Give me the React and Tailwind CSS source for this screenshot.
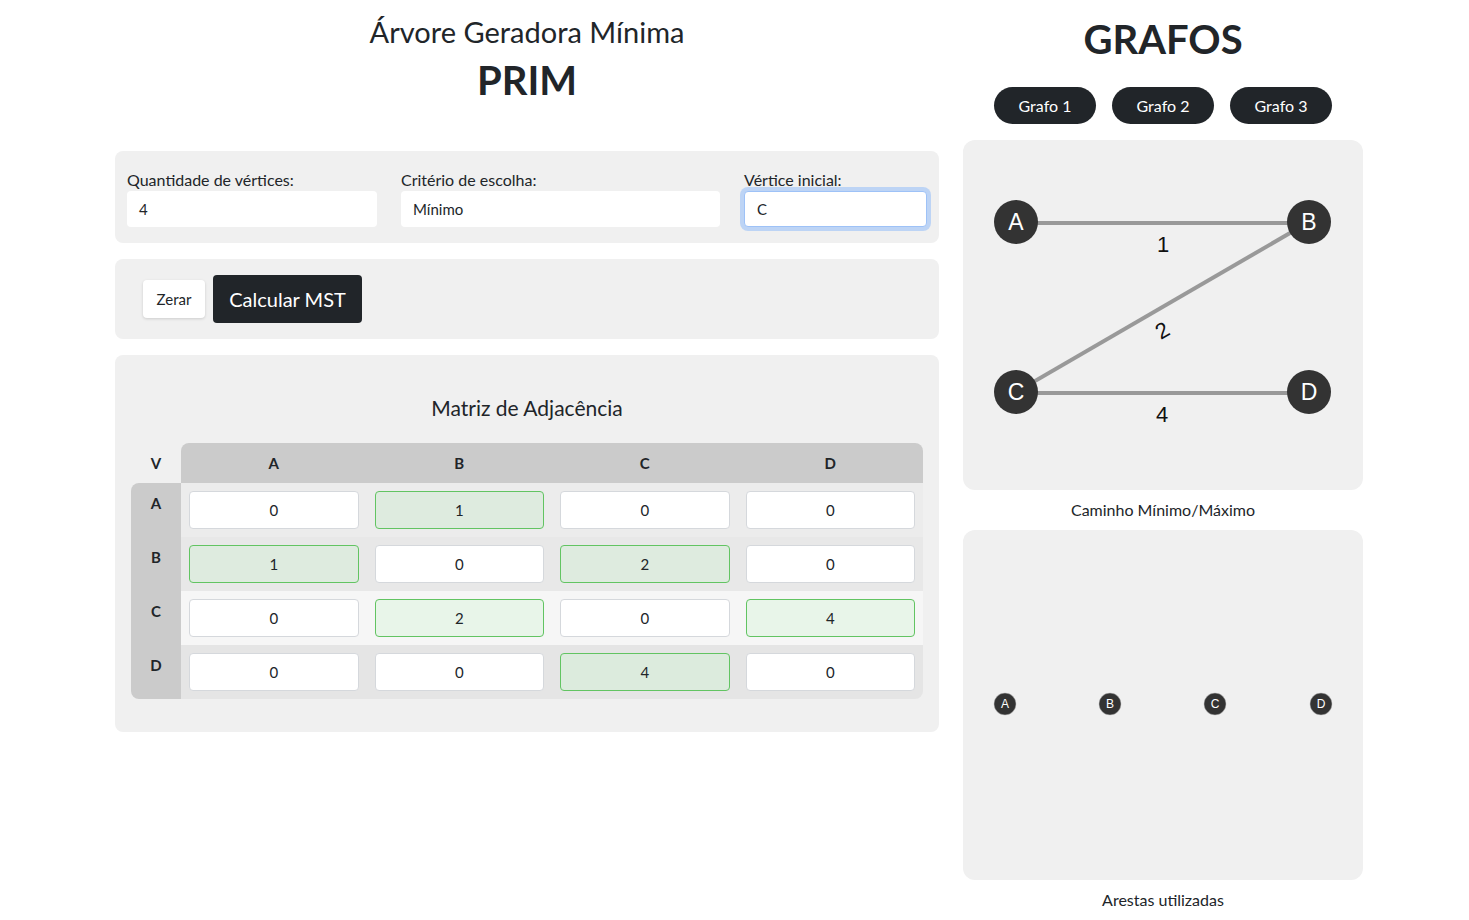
import React from 'react';

const vertices = ['A', 'B', 'C', 'D'];

const matriz = [
  [0, 1, 0, 0],
  [1, 0, 2, 0],
  [0, 2, 0, 4],
  [0, 0, 4, 0],
];

const rowBg = ['bg-[#ececec]', 'bg-[#e8e8e8]', 'bg-[#f6f6f6]', 'bg-[#e5e5e5]'];
const greenBg = ['bg-[#deebdf]', 'bg-[#deebdf]', 'bg-[#e8f5e9]', 'bg-[#dcebdd]'];

function Celula({ valor, linha, ultima }) {
  const ativo = valor !== 0;
  return (
    <div className={`px-2 py-2 ${rowBg[linha]} ${ultima ? 'rounded-br-lg' : ''}`}>
      <div
        className={`h-[38px] flex items-center justify-center rounded text-[15px] border ${
          ativo ? `${greenBg[linha]} border-[#62c462]` : 'bg-white border-[#d5d8dc]'
        }`}
      >
        {valor}
      </div>
    </div>
  );
}

function GrafoCompleto() {
  const nos = { A: [53, 82], B: [346, 82], C: [53, 252], D: [346, 252] };
  return (
    <svg width="400" height="350" viewBox="0 0 400 350">
      <g stroke="#999" strokeWidth="4">
        <line x1="53" y1="83" x2="346" y2="83" />
        <line x1="53" y1="252" x2="346" y2="82" />
        <line x1="53" y1="253" x2="346" y2="253" />
      </g>
      <g fontFamily="'Liberation Sans', Arial, sans-serif" fontSize="22" fill="#111" textAnchor="middle">
        <text x="200" y="112">1</text>
        <text x="199" y="198" transform="rotate(-30 199 190)">2</text>
        <text x="199" y="282">4</text>
      </g>
      {Object.entries(nos).map(([nome, [x, y]]) => (
        <g key={nome}>
          <circle cx={x} cy={y} r="22" fill="#333" />
          <text
            x={x}
            y={y + 8}
            textAnchor="middle"
            fill="#fff"
            fontSize="23"
            fontFamily="'Liberation Sans', Arial, sans-serif"
          >
            {nome}
          </text>
        </g>
      ))}
    </svg>
  );
}

function GrafoArestas() {
  const xs = [42, 147, 252, 358];
  return (
    <svg width="400" height="350" viewBox="0 0 400 350">
      {vertices.map((v, i) => (
        <g key={v}>
          <circle cx={xs[i]} cy="174" r="11" fill="#333" stroke="#bbb" strokeWidth="0.5" />
          <text
            x={xs[i]}
            y="178"
            textAnchor="middle"
            fill="#fff"
            fontSize="12"
            fontFamily="'Liberation Sans', Arial, sans-serif"
          >
            {v}
          </text>
        </g>
      ))}
    </svg>
  );
}

export default function App() {
  return (
    <div className="min-h-screen bg-white text-[#212529] font-['Lato','Noto_Sans',sans-serif]">
      <div className="flex gap-6 pl-[115px]">
        {/* Coluna esquerda */}
        <div className="w-[824px]">
          <h2 className="mt-[14px] text-center text-[29px] leading-[36px]">Árvore Geradora Mínima</h2>
          <h1 className="mt-[6px] text-center text-[40px] leading-[48px] font-bold">PRIM</h1>

          <div className="mt-[47px] rounded-lg bg-[#f0f0f0] px-3 pt-[19px] pb-4 flex gap-6">
            <div className="w-[250px]">
              <label className="block text-[16px] leading-[20px] mb-[1px]">Quantidade de vértices:</label>
              <div className="h-9 rounded bg-white flex items-center px-3 text-[15px]">4</div>
            </div>
            <div className="w-[319px]">
              <label className="block text-[16px] leading-[20px] mb-[1px]">Critério de escolha:</label>
              <div className="h-9 rounded bg-white flex items-center px-3 text-[15px]">Mínimo</div>
            </div>
            <div className="flex-1">
              <label className="block text-[16px] leading-[20px] mb-[1px]">Vértice inicial:</label>
              <div className="h-9 rounded bg-white flex items-center px-3 text-[15px] border border-[#9ec2f7] ring-4 ring-[#bdd4f5]">
                C
              </div>
            </div>
          </div>

          <div className="mt-4 h-20 rounded-lg bg-[#f0f0f0] px-7 flex items-center gap-2">
            <button className="h-[38px] w-[62px] rounded bg-white text-[15px] shadow-[0_1px_3px_rgba(0,0,0,0.15)]">Zerar</button>
            <button className="h-12 w-[149px] rounded bg-[#212529] text-white text-[20px]">Calcular MST</button>
          </div>

          <div className="mt-4 rounded-lg bg-[#f0f0f0] px-4 pt-[39px] pb-[33px]">
            <h3 className="text-center text-[21px] leading-[28px] mb-[21px]">Matriz de Adjacência</h3>
            <div className="grid grid-cols-[50px_repeat(4,1fr)] text-[15px]">
              <div className="h-10 flex items-center justify-center font-bold">V</div>
              {vertices.map((v, i) => (
                <div
                  key={v}
                  className={`h-10 flex items-center justify-center font-bold bg-[#cbcbcb] ${
                    i === 0 ? 'rounded-tl-lg' : ''
                  } ${i === 3 ? 'rounded-tr-lg' : ''}`}
                >
                  {v}
                </div>
              ))}
              {matriz.map((linha, r) => (
                <React.Fragment key={r}>
                  <div
                    className={`bg-[#cbcbcb] pt-[10px] text-center font-bold leading-[20px] ${
                      r === 0 ? 'rounded-tl-lg' : ''
                    } ${r === 3 ? 'rounded-bl-lg' : ''}`}
                  >
                    {vertices[r]}
                  </div>
                  {linha.map((valor, c) => (
                    <Celula key={c} valor={valor} linha={r} ultima={r === 3 && c === 3} />
                  ))}
                </React.Fragment>
              ))}
            </div>
          </div>
        </div>

        {/* Coluna direita */}
        <div className="w-[400px]">
          <h1 className="mt-[15px] text-center text-[40px] leading-[48px] font-bold">GRAFOS</h1>
          <div className="mt-[24px] flex justify-center gap-4">
            <button className="h-[37px] w-[102px] rounded-full bg-[#212529] text-white text-[16px]">Grafo 1</button>
            <button className="h-[37px] w-[102px] rounded-full bg-[#212529] text-white text-[16px]">Grafo 2</button>
            <button className="h-[37px] w-[102px] rounded-full bg-[#212529] text-white text-[16px]">Grafo 3</button>
          </div>

          <div className="mt-4 h-[350px] rounded-xl bg-[#f0f0f0]">
            <GrafoCompleto />
          </div>
          <p className="text-center text-[16px] leading-[20px] py-[10px]">Caminho Mínimo/Máximo</p>

          <div className="h-[350px] rounded-xl bg-[#f0f0f0]">
            <GrafoArestas />
          </div>
          <p className="text-center text-[16px] leading-[20px] py-[10px]">Arestas utilizadas</p>
        </div>
      </div>
    </div>
  );
}
